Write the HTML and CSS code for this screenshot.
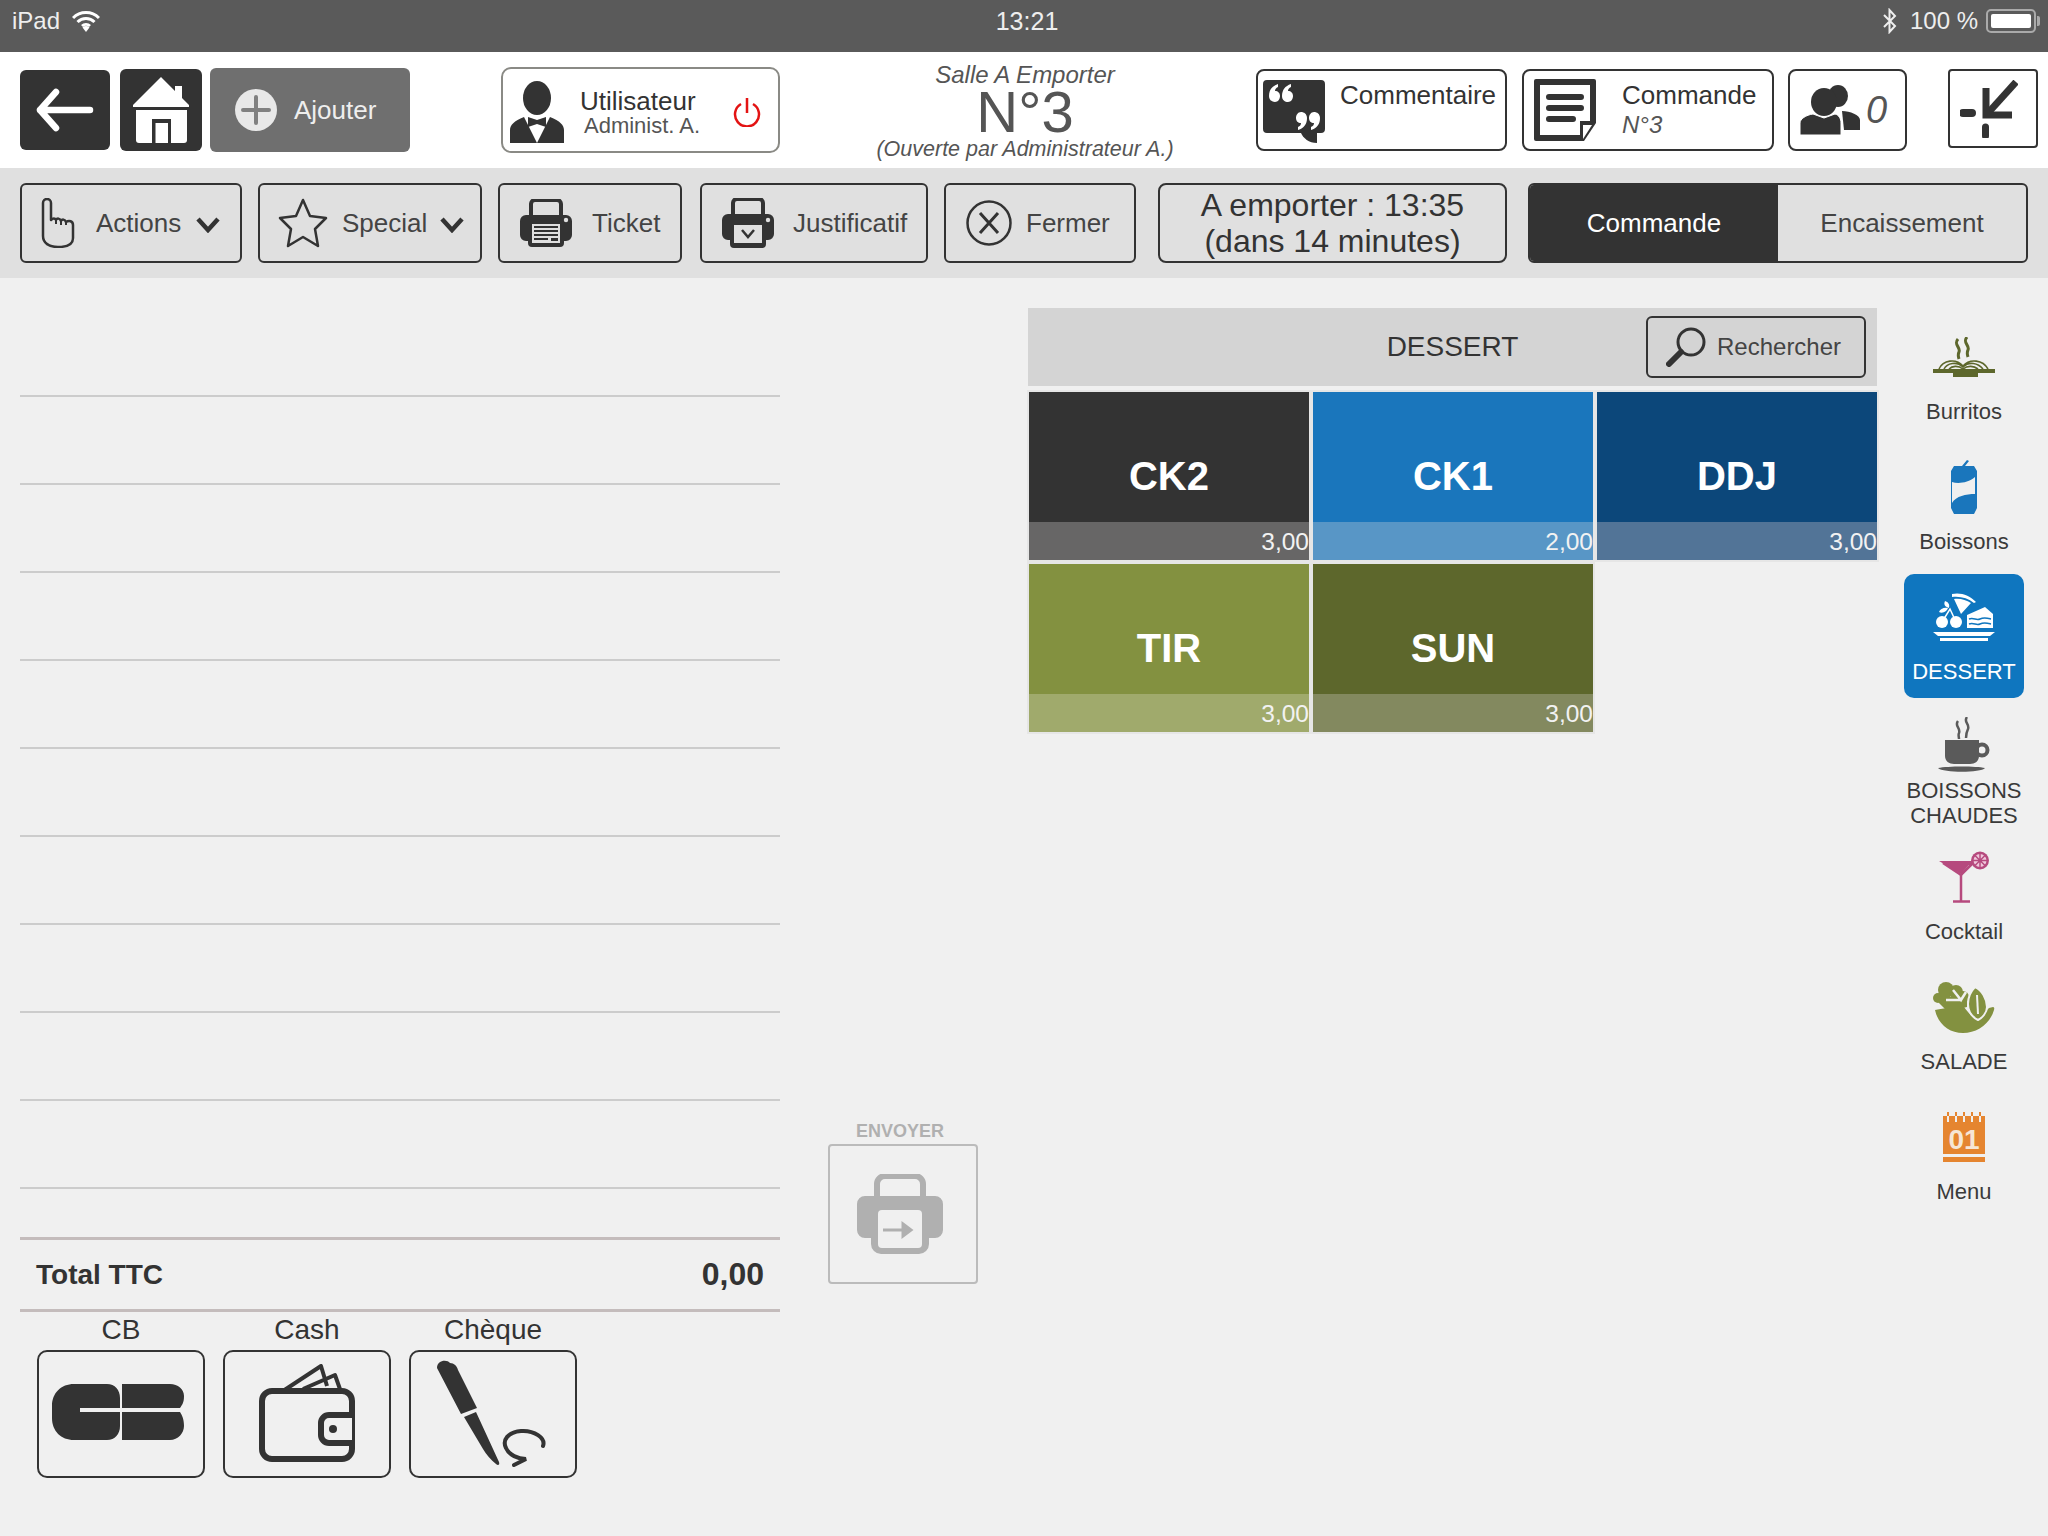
FILE: index.html
```html
<!DOCTYPE html>
<html lang="fr">
<head>
    <meta charset="UTF-8">
    <title>Commande N°3</title>
    <link rel="stylesheet" href="styles.css">
</head>
<body>
    <!-- Barre iPad -->
    <div class="statusbar">
        <div class="status-left">
            <span>iPad</span>
            <svg width="28" height="24" viewBox="0 0 28 24"><path d="M1 9a18 18 0 0 1 26 0M5.500 13a12 12 0 0 1 17 0M10 17a6 6 0 0 1 8 0" fill="none" stroke="#fff" stroke-width="3"/><path d="M14 23l-3.500-4.500a5 5 0 0 1 7 0z" fill="#fff"/></svg>
        </div>
        <div class="status-time">13:21</div>
        <div class="status-right">
            <svg width="16" height="26" viewBox="0 0 16 26"><path d="M2 7l11 11-5.500 6V2L13 8 2 19" fill="none" stroke="#eee" stroke-width="2"/></svg>
            <span>100 %</span>
            <div class="battery"><div class="battery-fill"></div></div>
            <div class="battery-nub"></div>
        </div>
    </div>

    <!-- En-tete -->
    <div class="header">
        <button class="btn-dark btn-back">
            <svg width="58" height="44" viewBox="0 0 58 44"><path d="M54 22H4M20 4L4 22l16 18" fill="none" stroke="#fff" stroke-width="6.500" stroke-linecap="round" stroke-linejoin="round"/></svg>
        </button>
        <button class="btn-dark btn-home">
            <svg width="56" height="66" viewBox="0 0 56 66"><path d="M28 0l14 14V9h7v12l7 7v2H0v-2z" fill="#fff"/><path d="M3 33h51v30a3 3 0 0 1-3 3H6a3 3 0 0 1-3-3z" fill="#fff"/><path d="M19 66V42h19v24z" fill="#333"/><path d="M22.500 66V46H35v20z" fill="#fff"/></svg>
        </button>
        <button class="btn-add">
            <svg width="42" height="42" viewBox="0 0 42 42"><circle cx="21" cy="21" r="21" fill="#e8e8e8"/><path d="M21 8v26M8 21h26" stroke="#808080" stroke-width="4" stroke-linecap="round"/></svg>
            <span>Ajouter</span>
        </button>
        <div class="user-box">
            <svg width="54" height="62" viewBox="0 0 54 62"><ellipse cx="27" cy="17" rx="14" ry="17" fill="#333"/><path d="M0 62V49c0-5 4-9 14-13l13 26 13-26c10 4 14 8 14 13v13z" fill="#333"/><path d="M18 36l9 3 9-3v10l-9-3-9 3z" fill="#333"/></svg>
            <div class="user-text">
                <div class="user-name">Utilisateur</div>
                <div class="user-role">Administ. A.</div>
            </div>
            <svg class="power" width="30" height="30" viewBox="0 0 30 30"><path d="M9 7a12 12 0 1 0 12 0M15 1v15" fill="none" stroke="#e31313" stroke-width="2.500"/></svg>
        </div>
        <div class="order-title">
            <div class="order-room">Salle A Emporter</div>
            <div class="order-num">N°3</div>
            <div class="order-open">(Ouverte par Administrateur A.)</div>
        </div>
        <div class="head-btn comment-btn">
            <svg width="62" height="64" viewBox="0 0 62 64"><path d="M4 0h54a4 4 0 0 1 4 4v45a4 4 0 0 1-4 4h-4v10c-8 0-14-5-16-10H4a4 4 0 0 1-4-4V4a4 4 0 0 1 4-4z" fill="#333"/><path d="M6 16c0-6 3-10 9-12v3c-2 1-3 2-3 4 3 0 5 2 5 5s-2 6-5 6-6-2-6-6zM19 16c0-6 3-10 9-12v3c-2 1-3 2-3 4 3 0 5 2 5 5s-2 6-5 6-6-2-6-6zM57 38c0 6-3 10-9 12v-3c2-1 3-2 3-4-3 0-5-2-5-5s2-6 5-6 6 2 6 6zM44 38c0 6-3 10-9 12v-3c2-1 3-2 3-4-3 0-5-2-5-5s2-6 5-6 6 2 6 6z" fill="#fff"/></svg>
            <span class="head-btn-label">Commentaire</span>
        </div>
        <div class="head-btn cmd-btn">
            <svg width="62" height="62" viewBox="0 0 62 62"><path d="M2 0h58a2 2 0 0 1 2 2v42L50 62H2a2 2 0 0 1-2-2V2a2 2 0 0 1 2-2z" fill="#333"/><path d="M6 6h50v36H46v14H6z" fill="#fff"/><path d="M15 18h32M15 29h32M15 40h24" stroke="#333" stroke-width="6" stroke-linecap="round"/><path d="M49 46h9L49 60z" fill="#fff"/></svg>
            <div class="cmd-text">
                <div>Commande</div>
                <div class="cmd-sub">N°3</div>
            </div>
        </div>
        <div class="head-btn people-btn">
            <svg width="60" height="50" viewBox="0 0 60 50"><ellipse cx="38" cy="11" rx="10" ry="11" fill="#333"/><path d="M42 26c8 0 18 4 18 9v10H44z" fill="#333"/><ellipse cx="24" cy="17" rx="13" ry="14" fill="#333"/><path d="M0 50V38c0-4 6-8 13-9l11 4 11-4c4 1 6 5 6 9v12z" fill="#333" stroke="#fff" stroke-width="1"/></svg>
            <span class="people-count">0</span>
        </div>
        <div class="head-btn collapse-btn">
            <svg width="58" height="58" viewBox="0 0 58 58"><path d="M56 2L28 33" stroke="#333" stroke-width="7"/><path d="M26 8v27h26" fill="none" stroke="#333" stroke-width="7"/><path d="M3 33h9" stroke="#333" stroke-width="8" stroke-linecap="round"/><path d="M25.500 47v9" stroke="#333" stroke-width="7" stroke-linecap="round"/></svg>
        </div>
    </div>

    <!-- Barre d'actions -->
    <div class="toolbar">
        <div class="tool-btn tool-actions">
            <svg width="34" height="50" viewBox="0 0 34 50"><path d="M2 38V5a4 4 0 0 1 8 0v17c2-2 4-2 5 0 1-2 4-2 5 1 1-2 4-2 5 1 3-2 7-1 7 3v13c0 6-6 9-15 9S2 45 2 38z" fill="none" stroke="#333" stroke-width="2.500" stroke-linejoin="round"/><path d="M15 22v4M20 23v4M25 24v3" stroke="#333" stroke-width="2"/></svg>
            <span>Actions</span>
            <svg class="chev" width="24" height="16" viewBox="0 0 24 16"><path d="M2 2l10 11L22 2" fill="none" stroke="#333" stroke-width="4.500"/></svg>
        </div>
        <div class="tool-btn tool-special">
            <svg width="50" height="50" viewBox="0 0 50 50"><path d="M25 2l7 16 16 2-11 11 3 17-15-9-15 9 3-17L2 20l16-2z" fill="none" stroke="#333" stroke-width="2.500" stroke-linejoin="round"/></svg>
            <span>Special</span>
            <svg class="chev" width="24" height="16" viewBox="0 0 24 16"><path d="M2 2l10 11L22 2" fill="none" stroke="#333" stroke-width="4.500"/></svg>
        </div>
        <div class="tool-btn tool-ticket">
            <svg width="52" height="48" viewBox="0 0 52 48"><path d="M11 18V5a4 4 0 0 1 4-4h22a4 4 0 0 1 4 4v13" fill="none" stroke="#333" stroke-width="4"/><path d="M6 16h40a6 6 0 0 1 6 6v14a6 6 0 0 1-6 6h-2v2a4 4 0 0 1-4 4H12a4 4 0 0 1-4-4v-2H6a6 6 0 0 1-6-6V22a6 6 0 0 1 6-6z" fill="#333"/><path d="M12 25h28v19H12z" fill="#e0e0e0"/><path d="M14 28h24M14 32h24M14 36h24M14 40h14" stroke="#333" stroke-width="1.800"/><path d="M31 39h7v3h-7z" fill="#333"/><circle cx="46" cy="21" r="2.200" fill="#e0e0e0"/></svg>
            <span>Ticket</span>
        </div>
        <div class="tool-btn tool-just">
            <svg width="52" height="50" viewBox="0 0 52 50"><path d="M11 18V5a4 4 0 0 1 4-4h22a4 4 0 0 1 4 4v13" fill="none" stroke="#333" stroke-width="4"/><path d="M6 16h40a6 6 0 0 1 6 6v14a6 6 0 0 1-6 6h-2v4a4 4 0 0 1-4 4H12a4 4 0 0 1-4-4v-4H6a6 6 0 0 1-6-6V22a6 6 0 0 1 6-6z" fill="#333"/><path d="M12 27h28v18H12z" fill="#e0e0e0"/><path d="M20 32l6 7 6-7" fill="none" stroke="#333" stroke-width="2.500"/><circle cx="46" cy="22" r="2.200" fill="#e0e0e0"/></svg>
            <span>Justificatif</span>
        </div>
        <div class="tool-btn tool-close">
            <svg width="46" height="46" viewBox="0 0 46 46"><circle cx="23" cy="23" r="21.500" fill="none" stroke="#333" stroke-width="2.500"/><path d="M14 13l18 20M32 13L14 33" stroke="#333" stroke-width="3"/></svg>
            <span>Fermer</span>
        </div>
        <div class="tool-btn tool-time">A emporter : 13:35<br>(dans 14 minutes)</div>
        <div class="segment">
            <div class="seg seg-on">Commande</div>
            <div class="seg">Encaissement</div>
        </div>
    </div>

    <div class="main">
        <!-- Ticket en cours -->
        <div class="ticket">
            <div class="lines">
                <div class="line"></div>
                <div class="line"></div>
                <div class="line"></div>
                <div class="line"></div>
                <div class="line"></div>
                <div class="line"></div>
                <div class="line"></div>
                <div class="line"></div>
                <div class="line"></div>
                <div class="line"></div>
            </div>
            <div class="total">
                <span>Total TTC</span>
                <span class="total-val">0,00</span>
            </div>
            <div class="pay-list">
                <div class="pay pay-cb">
                    <div class="pay-label">CB</div>
                    <div class="pay-btn">
                        <svg width="132" height="56" viewBox="0 0 132 56"><path d="M22 0h33c8 0 13 6 13 14v10H28v4h40v14c0 8-5 14-13 14H22C9 56 0 47 0 34V22C0 9 9 0 22 0z" fill="#333"/><path d="M70 0h48c8 0 14 5 14 12s-2 9-4 12H70zM70 28h58c2 3 4 7 4 14s-6 14-14 14H70z" fill="#333"/></svg>
                    </div>
                </div>
                <div class="pay pay-cash">
                    <div class="pay-label">Cash</div>
                    <div class="pay-btn">
                        <svg width="96" height="98" viewBox="0 0 96 98"><path d="M24 27L62 2l6 20M44 25l32-14 6 17" fill="none" stroke="#333" stroke-width="4" stroke-linejoin="round"/><rect x="3" y="27" width="90" height="68" rx="10" fill="#f0f0f0" stroke="#333" stroke-width="6"/><path d="M93 51H70a8 8 0 0 0-8 8v12a8 8 0 0 0 8 8h23" fill="#f0f0f0" stroke="#333" stroke-width="6"/><circle cx="74" cy="65" r="4" fill="#333"/></svg>
                    </div>
                </div>
                <div class="pay">
                    <div class="pay-label">Chèque</div>
                    <div class="pay-btn">
                        <svg width="112" height="108" viewBox="0 0 112 108"><path d="M0 8C0 0 10-1 13 3c4 0 7 3 8 7l19 38-16 6z" fill="#333"/><path d="M27 57l12-5 23 50c1 3-1 4-3 2-5-4-10-10-13-15z" fill="#333"/><path d="M106 86c3-8-9-16-22-15-13 1-19 9-15 17 3 7 12 11 20 11l-12 6" fill="none" stroke="#333" stroke-width="4" stroke-linecap="round"/></svg>
                    </div>
                </div>
            </div>
        </div>

        <!-- Envoyer -->
        <div class="send">
            <div class="send-label">ENVOYER</div>
            <div class="send-btn">
                <svg width="86" height="80" viewBox="0 0 86 80"><path d="M20 28V10a8 8 0 0 1 8-8h30a8 8 0 0 1 8 8v18" fill="none" stroke="#b0b0b0" stroke-width="6"/><path d="M8 22h70a8 8 0 0 1 8 8v26a8 8 0 0 1-8 8H72v6a10 10 0 0 1-10 10H24a10 10 0 0 1-10-10v-6H8a8 8 0 0 1-8-8V30a8 8 0 0 1 8-8z" fill="#b0b0b0"/><rect x="21" y="36" width="44" height="38" rx="4" fill="#f0f0f0"/><path d="M26 56h26M46 50l8 6-8 6z" stroke="#b0b0b0" stroke-width="3" fill="#b0b0b0"/></svg>
            </div>
        </div>

        <!-- Catalogue -->
        <div class="catalog">
            <div class="cat-head">
                <div></div>
                <div class="cat-title">DESSERT</div>
                <div class="search-btn">
                    <svg width="40" height="40" viewBox="0 0 40 40"><circle cx="25" cy="15" r="13" fill="none" stroke="#333" stroke-width="3"/><path d="M15 25L3 37" stroke="#333" stroke-width="6" stroke-linecap="round"/></svg>
                    <span>Rechercher</span>
                </div>
            </div>
            <div class="tiles">
                <div class="tile tile-black"><div class="tile-name">CK2</div><div class="tile-price">3,00</div></div>
                <div class="tile tile-blue"><div class="tile-name">CK1</div><div class="tile-price">2,00</div></div>
                <div class="tile tile-navy"><div class="tile-name">DDJ</div><div class="tile-price">3,00</div></div>
                <div class="tile tile-olive"><div class="tile-name">TIR</div><div class="tile-price">3,00</div></div>
                <div class="tile tile-moss"><div class="tile-name">SUN</div><div class="tile-price">3,00</div></div>
            </div>
        </div>

        <!-- Familles -->
        <div class="families">
            <div class="family">
                <div class="fam-icon">
                    <svg width="62" height="40" viewBox="0 0 62 40"><path d="M25 2c-5 6 3 8 1 13-1 2-1 4 0 7M34 0c-5 6 3 8 1 13-1 2-1 4 0 7" fill="none" stroke="#5d672c" stroke-width="3"/><path d="M6 32c4-9 17-11 24-3 7-8 20-6 25 3M11 32c3-6 13-8 19-2 6-6 15-4 20 2M16 32c3-3 9-4 14 0 5-4 11-3 15 0" fill="none" stroke="#5d672c" stroke-width="1.600"/><path d="M0 32h62v4H45v4H20v-4H0z" fill="#5d672c"/></svg>
                </div>
                <div class="fam-label">Burritos</div>
            </div>
            <div class="family">
                <div class="fam-icon">
                    <svg width="30" height="54" viewBox="0 0 30 54"><path d="M13 6l5-6 2 1-4 5h9l3 5v37l-3 6H5l-3-6V11l3-5z" fill="#1a76bc"/><path d="M3 22c6 2 16 1 23-5v17c-9 0-19 2-23 9z" fill="#f0f0f0"/></svg>
                </div>
                <div class="fam-label">Boissons</div>
            </div>
            <div class="family family-on">
                <div class="fam-icon">
                    <svg width="62" height="48" viewBox="0 0 62 48"><path d="M19 1c8-2 18 1 24 8l-2 1c-6-5-14-7-22-6zM21 6c6-1 12 1 17 4L28 21z" fill="#fff"/><circle cx="9" cy="29" r="6" fill="#fff"/><circle cx="23" cy="29" r="6" fill="#fff"/><path d="M9 29l8-13 6 13" fill="none" stroke="#fff" stroke-width="1.500"/><path d="M6 19c1-3 5-5 9-4-1 3-5 6-9 4zM12 8c3 1 5 3 4 7-3-1-6-3-4-7z" fill="#fff"/><path d="M34 22l18-8 8 7v14H34z" fill="#fff"/><path d="M36 26c5-2 7 2 11 0s7-1 11 0M36 31c5-2 7 2 11 0s7-1 11 0" fill="none" stroke="#0f76bf" stroke-width="1.500"/><path d="M0 39h62l-5 4H5zM7 45h48v3H7z" fill="#fff"/></svg>
                </div>
                <div class="fam-label">DESSERT</div>
            </div>
            <div class="family">
                <div class="fam-icon fam-icon-tall">
                    <svg width="52" height="56" viewBox="0 0 52 56"><path d="M20 4c-4 5 3 7 1 12-1 2 0 4 0 6M29 0c-4 5 3 7 1 12-1 2-2 5-2 9" fill="none" stroke="#5a5a5a" stroke-width="2.500"/><path d="M7 23h34v16c0 5-4 8-9 8H16c-5 0-9-3-9-8z" fill="#5a5a5a"/><circle cx="44" cy="33" r="5.500" fill="none" stroke="#5a5a5a" stroke-width="4"/><path d="M0 51c10-2 38-2 47 0-4 5-42 5-47 0z" fill="#5a5a5a"/></svg>
                </div>
                <div class="fam-label">BOISSONS CHAUDES</div>
            </div>
            <div class="family">
                <div class="fam-icon">
                    <svg width="50" height="52" viewBox="0 0 50 52"><path d="M0 10h36v4H30L22 23z" fill="#b64a7e"/><path d="M4 12l18 12 12-12" fill="none" stroke="#b64a7e" stroke-width="2.500"/><path d="M22 23v28M14 50.500h17" stroke="#b64a7e" stroke-width="2.500"/><circle cx="41" cy="9.500" r="9" fill="#b64a7e"/><circle cx="41" cy="9.500" r="6.500" fill="#f0c8dc"/><path d="M41 2v15M33.500 9.500h15M36 4.500l10 10M46 4.500l-10 10" stroke="#b64a7e" stroke-width="1.500"/></svg>
                </div>
                <div class="fam-label">Cocktail</div>
            </div>
            <div class="family">
                <div class="fam-icon">
                    <svg width="62" height="52" viewBox="0 0 62 52"><path d="M2 29c8-1 20-4 29-3 2 3 6 8 12 12 5-2 10-8 13-11l4-1c2 0 1 3 1 3-4 14-17 23-31 23S5 43 2 29z" fill="#839140"/><circle cx="5" cy="17" r="5" fill="#839140"/><circle cx="13" cy="9" r="8" fill="#839140"/><circle cx="23" cy="11" r="7" fill="#839140"/><circle cx="30" cy="16" r="6" fill="#839140"/><path d="M6 16h28v10l-8 2H12l-6-6z" fill="#839140"/><path d="M13 19h16M20 9l8 10 5-8" fill="none" stroke="#f0f0f0" stroke-width="2.500"/><path d="M42 6c7 3 12 12 12 20 0 6-5 11-9 13-6-3-10-9-10-16 0-6 3-13 7-17z" fill="#839140" stroke="#f0f0f0" stroke-width="2"/><path d="M44 14l1 19" stroke="#f0f0f0" stroke-width="2"/></svg>
                </div>
                <div class="fam-label">SALADE</div>
            </div>
            <div class="family">
                <div class="fam-icon">
                    <svg width="42" height="50" viewBox="0 0 42 50"><path d="M0 4h42v38H0zM0 45h42v5H0z" fill="#e58530"/><path d="M4 0h2v10H4zM12 0h2v10h-2zM20 0h2v10h-2zM28 0h2v10h-2zM36 0h2v10h-2z" fill="#f0f0f0"/><path d="M4 0h2v4H4zM12 0h2v4h-2zM20 0h2v4h-2zM28 0h2v4h-2zM36 0h2v4h-2z" fill="#e58530"/><text x="21" y="37" text-anchor="middle" class="cal-num">01</text></svg>
                </div>
                <div class="fam-label">Menu</div>
            </div>
        </div>
    </div>
</body>
</html>
```

FILE: styles.css
```css
/* Estilos generales */
* {
    box-sizing: border-box;
}

body {
    margin: 0;
    width: 2048px;
    height: 1536px;
    overflow: hidden;
    background-color: #f0f0f0;
    font-family: "Liberation Sans", Arial, sans-serif;
    color: #333;
}

svg {
    display: block;
    flex-shrink: 0;
}

button {
    font-family: inherit;
    border: none;
    padding: 0;
}

/* Barre iPad */
.statusbar {
    height: 52px;
    background-color: #5a5a5a;
    color: #eee;
    font-size: 24px;
    display: grid;
    grid-template-columns: 1fr auto 1fr;
    align-items: center;
    padding: 0 8px 10px 12px;
}

.status-left,
.status-right {
    display: flex;
    align-items: center;
    gap: 12px;
}

.status-right {
    justify-content: flex-end;
    gap: 8px;
}

.status-right span {
    margin-left: 4px;
}

.status-time {
    font-size: 25px;
    margin-left: 2px;
}

.battery {
    width: 50px;
    height: 24px;
    padding: 3px;
    border: 2px solid #aaa;
    border-radius: 5px;
}

.battery-fill {
    height: 100%;
    background-color: #fff;
    border-radius: 2px;
}

.battery-nub {
    width: 3px;
    height: 10px;
    margin-left: -7px;
    background-color: #aaa;
    border-radius: 0 2px 2px 0;
}

/* En-tete */
.header {
    height: 116px;
    background-color: #fff;
    display: flex;
    align-items: center;
    padding-left: 20px;
}

.btn-dark {
    background-color: #333;
    border-radius: 6px;
    display: flex;
    align-items: center;
    justify-content: center;
}

.btn-back {
    width: 90px;
    height: 80px;
    margin-right: 10px;
}

.btn-home {
    width: 82px;
    height: 82px;
    margin-right: 8px;
}

.btn-add {
    width: 200px;
    height: 84px;
    background-color: #6f6f6f;
    border-radius: 6px;
    display: flex;
    align-items: center;
    gap: 17px;
    padding-left: 25px;
    color: #eee;
    font-size: 26px;
}

.user-box {
    width: 279px;
    height: 86px;
    margin-left: 91px;
    border: 2px solid #8a8a85;
    border-radius: 10px;
    display: flex;
    align-items: center;
    padding: 4px 0 0 7px;
}

.user-text {
    margin-left: 16px;
    flex: 1;
}

.user-name {
    font-size: 26px;
    line-height: 28px;
}

.user-role {
    font-size: 22px;
    line-height: 22px;
    color: #555;
    margin-left: 4px;
}

.power {
    margin-right: 16px;
}

.order-title {
    width: 340px;
    margin-left: 75px;
    margin-top: 3px;
    text-align: center;
    color: #555;
    font-style: italic;
    font-size: 24px;
}

.order-room {
    line-height: 24px;
}

.order-num {
    font-style: normal;
    font-size: 58px;
    line-height: 50px;
}

.order-open {
    font-size: 21.500px;
    line-height: 24px;
}

.head-btn {
    height: 82px;
    border: 2px solid #333;
    border-radius: 8px;
    display: flex;
    align-items: center;
    font-size: 26px;
}

.comment-btn {
    width: 251px;
    margin-left: 61px;
    padding: 4px 0 0 5px;
    gap: 15px;
    align-items: flex-start;
}

.comment-btn svg {
    margin-top: 5px;
}

.head-btn-label {
    line-height: 40px;
}

.cmd-btn {
    width: 252px;
    margin-left: 15px;
    padding-left: 10px;
    gap: 26px;
}

.cmd-text {
    line-height: 30px;
}

.cmd-sub {
    font-style: italic;
    font-size: 24px;
    color: #555;
}

.people-btn {
    width: 119px;
    margin-left: 14px;
    padding-left: 10px;
    gap: 6px;
}

.people-count {
    font-size: 38px;
    font-style: italic;
    color: #555;
}

.collapse-btn {
    width: 90px;
    height: 79px;
    margin-left: 41px;
    margin-top: -3px;
    padding-left: 10px;
    border-radius: 4px;
}

/* Barre d'actions */
.toolbar {
    height: 110px;
    background-color: #e0e0e0;
    display: flex;
    align-items: center;
    padding-left: 20px;
    font-size: 26px;
    color: #444;
}

.tool-btn {
    height: 80px;
    border: 2px solid #333;
    border-radius: 6px;
    display: flex;
    align-items: center;
}

.tool-actions {
    width: 222px;
    padding-left: 19px;
}

.tool-actions span {
    margin-left: 21px;
}

.tool-actions .chev {
    margin-left: 15px;
}

.tool-special {
    width: 224px;
    margin-left: 16px;
    padding-left: 18px;
}

.tool-special span {
    margin-left: 14px;
}

.chev {
    margin-left: 13px;
    margin-top: 4px;
}

.tool-ticket {
    width: 184px;
    margin-left: 16px;
    padding-left: 20px;
    gap: 20px;
}

.tool-just {
    width: 228px;
    margin-left: 18px;
    padding-left: 20px;
    gap: 19px;
}

.tool-close {
    width: 192px;
    margin-left: 16px;
    padding-left: 20px;
    gap: 14px;
}

.tool-time {
    width: 349px;
    margin-left: 22px;
    justify-content: center;
    text-align: center;
    font-size: 32px;
    line-height: 36px;
    color: #333;
    border-radius: 8px;
}

.segment {
    width: 500px;
    height: 80px;
    margin-left: 21px;
    border: 2px solid #333;
    border-radius: 6px;
    overflow: hidden;
    display: flex;
}

.seg {
    flex: 1;
    display: flex;
    align-items: center;
    justify-content: center;
}

.seg-on {
    flex: none;
    width: 248px;
    background-color: #333;
    color: #fff;
}

/* Contenu */
.main {
    display: flex;
    padding-left: 20px;
}

/* Ticket en cours */
.ticket {
    width: 760px;
    padding-top: 31px;
}

.line {
    height: 88px;
    border-bottom: 2px solid #ccc;
}

.total {
    margin-top: 48px;
    height: 75px;
    border-top: 3px solid #c4bcbc;
    border-bottom: 3px solid #c4bcbc;
    display: flex;
    justify-content: space-between;
    align-items: center;
    padding: 0 16px;
    font-size: 28px;
    font-weight: bold;
}

.total-val {
    font-size: 32px;
}

.pay-list {
    display: flex;
    gap: 18px;
    padding-left: 17px;
}

.pay {
    width: 168px;
}

.pay-label {
    text-align: center;
    font-size: 28px;
    line-height: 36px;
    margin-bottom: 2px;
    color: #333;
}

.pay-btn {
    height: 128px;
    border: 2px solid #333;
    border-radius: 10px;
    display: flex;
    align-items: center;
    justify-content: center;
}

.pay-cb .pay-btn svg {
    margin: 0 6px 4px 0;
}

.pay-cash .pay-btn svg {
    margin-bottom: 2px;
}

/* Envoyer */
.send {
    width: 150px;
    margin-left: 48px;
    padding-top: 842px;
}

.send-label {
    text-align: center;
    font-size: 18px;
    font-weight: bold;
    color: #b0b0b0;
    line-height: 22px;
    margin-right: 6px;
}

.send-btn {
    height: 140px;
    margin-top: 2px;
    padding-right: 6px;
    border: 2px solid #bbb;
    border-radius: 4px;
    display: flex;
    align-items: center;
    justify-content: center;
}

/* Catalogue */
.catalog {
    width: 849px;
    margin-left: 50px;
    padding-top: 30px;
}

.cat-head {
    height: 78px;
    background-color: #d4d4d4;
    display: grid;
    grid-template-columns: 1fr auto 1fr;
    align-items: center;
    padding: 0 11px;
    font-size: 28px;
}

.search-btn {
    width: 220px;
    height: 62px;
    justify-self: end;
    border: 2px solid #333;
    border-radius: 6px;
    display: flex;
    align-items: center;
    gap: 11px;
    padding-left: 18px;
    font-size: 24px;
    color: #444;
}

.tiles {
    margin-top: 6px;
    display: grid;
    grid-template-columns: repeat(3, 280px);
    grid-auto-rows: 168px;
    gap: 4px;
    margin-left: 1px;
}

.tile {
    color: #fff;
    display: flex;
    flex-direction: column;
    box-shadow: 0 0 0 2px #e6e6e6;
}

.tile-name {
    flex: 1;
    display: flex;
    align-items: center;
    justify-content: center;
    padding-top: 38px;
    font-size: 40px;
    font-weight: bold;
}

.tile-price {
    height: 38px;
    line-height: 40px;
    text-align: right;
    font-size: 24.500px;
    color: #f2f2f2;
}

.tile-black { background-color: #333; }
.tile-black .tile-price { background-color: #676666; }
.tile-blue { background-color: #1a76bc; }
.tile-blue .tile-price { background-color: #5896c6; }
.tile-navy { background-color: #0c477a; }
.tile-navy .tile-price { background-color: #527497; }
.tile-olive { background-color: #839140; }
.tile-olive .tile-price { background-color: #a0aa6c; }
.tile-moss { background-color: #5d672c; }
.tile-moss .tile-price { background-color: #83895f; }

/* Familles */
.families {
    width: 120px;
    margin-left: 27px;
    padding-top: 36px;
}

.family {
    height: 124px;
    margin-bottom: 6px;
    border-radius: 10px;
    display: flex;
    flex-direction: column;
    align-items: center;
    text-align: center;
    font-size: 22px;
    line-height: 25px;
    color: #3a3a3a;
}

.fam-icon {
    height: 85px;
    display: flex;
    align-items: center;
    justify-content: center;
}

.fam-icon-tall {
    height: 74px;
    padding-top: 8px;
}

.family-on {
    background-color: #0f76bf;
    color: #fff;
}

.cal-num {
    font-size: 28px;
    font-weight: bold;
    fill: #f6e6d6;
}
```
